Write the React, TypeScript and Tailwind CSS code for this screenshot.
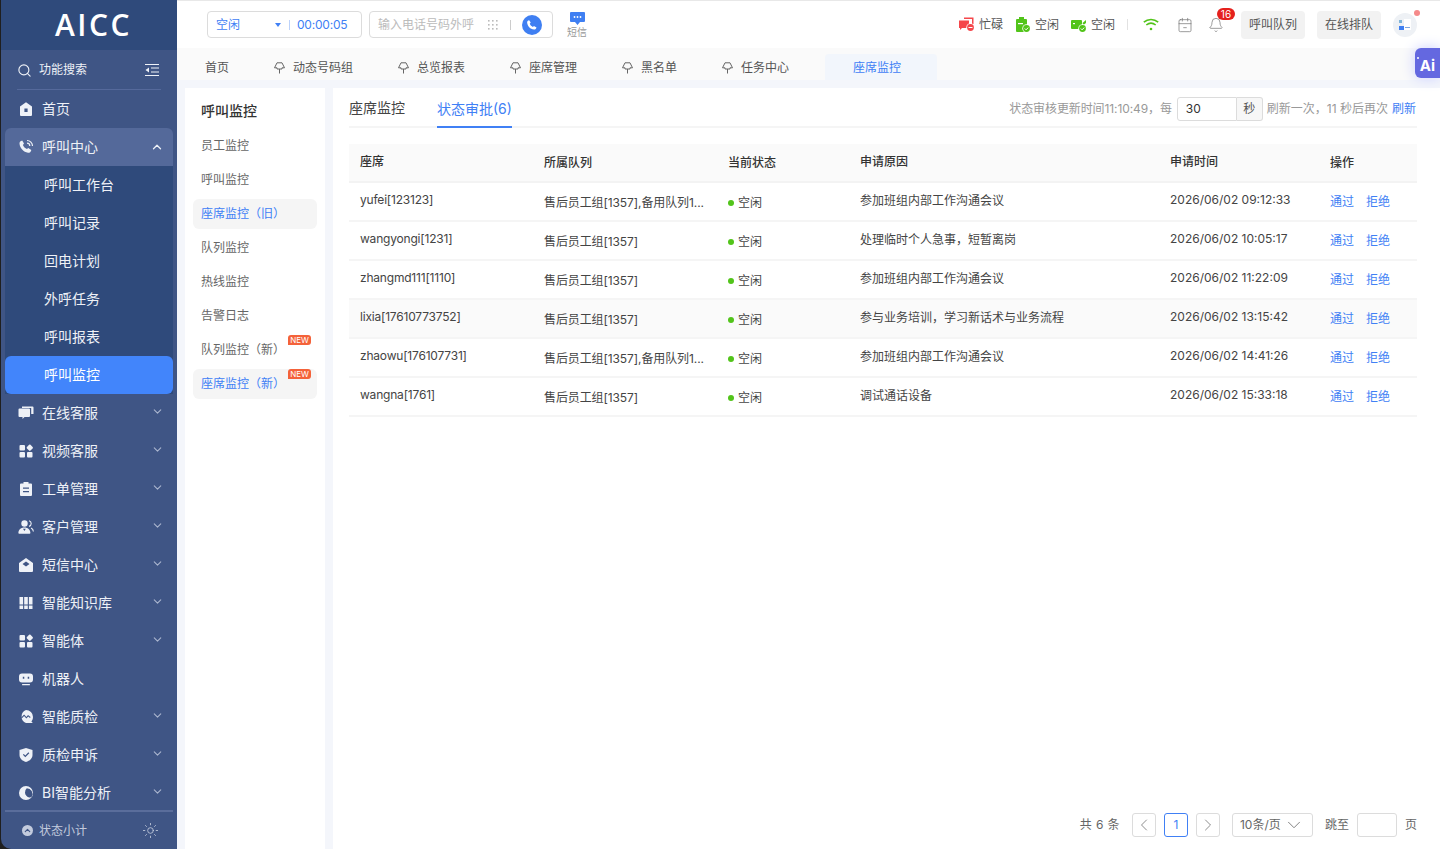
import { ReactNode } from 'react';
import { ChevronDown, ChevronLeft, ChevronRight, ChevronUp, Search, Sun, Bell, CalendarMinus2 } from 'lucide-react';

const font = "font-['Inter','Noto_Sans_CJK_SC',sans-serif]";

function Glyph({ children, size = 16 }: { children: ReactNode; size?: number }) {
  return (
    <svg width={size} height={size} viewBox="0 0 16 16" fill="currentColor" className="shrink-0">
      {children}
    </svg>
  );
}

const HomeIcon = () => (
  <Glyph>
    <path fillRule="evenodd" d="M8 1.200 14 5.400V14a1 1 0 0 1-1 1H3a1 1 0 0 1-1-1V5.400L8 1.200ZM6.400 7.500v3.400h3.200V7.500H6.400Z" />
  </Glyph>
);
const PhoneIcon = () => (
  <Glyph>
    <path d="M4.200 1.500 6 4.600 4.900 6c.7 1.800 2.200 3.300 4 4.100l1.400-1.100 3 1.900c-.4 1.900-1.700 3-3.300 2.900C5.500 13.400 1.800 9 1.500 4.600 1.400 3 2.500 1.800 4.200 1.500Z" />
    <path d="M9 1.500a5.500 5.500 0 0 1 5.500 5.500M9 4.200A2.800 2.800 0 0 1 11.800 7" fill="none" stroke="currentColor" strokeWidth="1.200" />
  </Glyph>
);
const ChatIcon = () => (
  <Glyph>
    <path d="M.5 4.500a1 1 0 0 1 1-1h9.500a1 1 0 0 1 1 1V11a1 1 0 0 1-1 1H6.500l-2 2v-2h-3a1 1 0 0 1-1-1Z" />
    <path d="M4 1.500h10.500a1 1 0 0 1 1 1V9h-2.300V3H4z" />
  </Glyph>
);
const AppsIcon = () => (
  <Glyph>
    <rect x="1.500" y="2" width="5.500" height="5.500" rx="1" />
    <rect x="1.500" y="9" width="5.500" height="5.500" rx="1" />
    <rect x="9" y="9" width="5.500" height="5.500" rx="1" />
    <rect x="9.300" y="2.200" width="5" height="5" rx="1" transform="rotate(45 11.800 4.700)" />
  </Glyph>
);
const TicketIcon = () => (
  <Glyph>
    <path fillRule="evenodd" d="M5.500 1h5v1.500H13a1 1 0 0 1 1 1V14a1 1 0 0 1-1 1H3a1 1 0 0 1-1-1V3.500a1 1 0 0 1 1-1h2.500V1ZM5 6.500v1.300h6V6.500H5Zm0 3.500v1.300h6V10H5Z" />
  </Glyph>
);
const PeopleIcon = () => (
  <Glyph>
    <circle cx="6.500" cy="4.500" r="3.200" />
    <path fillRule="evenodd" d="M.4 14c0-3.200 2.600-5.400 6-5.400s6 2.200 6 5.400a.8.8 0 0 1-.8.8H1.200a.8.8 0 0 1-.8-.8Zm4.600-4.300 1.400 2.400 1.400-2.400H5Z" />
    <path d="M11 1.800c1.400.4 2.200 1.500 2.200 2.800S12.400 7 11 7.400M13 9c1.500.7 2.300 2 2.400 3.500" fill="none" stroke="currentColor" strokeWidth="1.100" />
  </Glyph>
);
const MailIcon = () => (
  <Glyph>
    <path fillRule="evenodd" d="M8 1 15 6v8a1 1 0 0 1-1 1H2a1 1 0 0 1-1-1V6l7-5Zm0 3.500L4.500 7 8 9.500 11.500 7 8 4.500Z" />
  </Glyph>
);
const BooksIcon = () => (
  <Glyph>
    <path fillRule="evenodd" d="M1.500 2h3.600v12H1.500V2Zm4.700 0h3.600v12H6.200V2Zm4.700 0h3.600v12h-3.600V2ZM1.500 9.500v1h3.600v-1H1.500Zm4.700 0v1h3.600v-1H6.200Zm4.700 0v1h3.600v-1h-3.600Z" />
  </Glyph>
);
const RobotIcon = () => (
  <Glyph>
    <path fillRule="evenodd" d="M4 2.500h8a3 3 0 0 1 3 3v3a3 3 0 0 1-3 3H4a3 3 0 0 1-3-3v-3a3 3 0 0 1 3-3Zm.8 3.300v2h1.500v-2H4.800Zm4.900 0v2h1.500v-2H9.700Z" />
    <rect x="4" y="13" width="8" height="1.300" rx=".6" />
  </Glyph>
);
const PulseIcon = () => (
  <Glyph>
    <path fillRule="evenodd" d="M8 1a7 7 0 0 1 7 7c0 1.700-.6 3.200-1.600 4.400l1.400 1.600h-6.800a7 7 0 0 1 0-13ZM3.500 8.300l.8.800 1.800-2 2.300 2.500 1.800-2 1.800 1.300.6-.9-2.600-1.900-1.600 1.800-2.300-2.500L3.500 8.300Z" />
  </Glyph>
);
const ShieldIcon = () => (
  <Glyph>
    <path fillRule="evenodd" d="M8 1 14.500 3v5c0 3.300-2.500 5.800-6.500 7-4-1.200-6.500-3.700-6.500-7V3L8 1ZM4.900 7.800 7.300 10.200l4-4-.9-.9-3.100 3.100-1.500-1.500-.9.9Z" />
  </Glyph>
);
const PieIcon = () => (
  <Glyph>
    <path fillRule="evenodd" d="M8 1a7 7 0 1 1 0 14A7 7 0 0 1 8 1Zm.8 2.300a5.200 5.200 0 0 0-1.800 4.500c.2 2.400 2 4.300 4.400 4.700.8 0 1.800-.3 2.300-.8A5.600 5.600 0 0 0 8.800 3.300Z" />
  </Glyph>
);

type MenuItem = { label: string; icon: ReactNode; arrow?: boolean };

const topMenu: MenuItem[] = [
  { label: '在线客服', icon: <ChatIcon />, arrow: true },
  { label: '视频客服', icon: <AppsIcon />, arrow: true },
  { label: '工单管理', icon: <TicketIcon />, arrow: true },
  { label: '客户管理', icon: <PeopleIcon />, arrow: true },
  { label: '短信中心', icon: <MailIcon />, arrow: true },
  { label: '智能知识库', icon: <BooksIcon />, arrow: true },
  { label: '智能体', icon: <AppsIcon />, arrow: true },
  { label: '机器人', icon: <RobotIcon /> },
  { label: '智能质检', icon: <PulseIcon />, arrow: true },
  { label: '质检申诉', icon: <ShieldIcon />, arrow: true },
  { label: 'BI智能分析', icon: <PieIcon />, arrow: true },
];

const callSub = ['呼叫工作台', '呼叫记录', '回电计划', '外呼任务', '呼叫报表'];

function Sidebar() {
  return (
    <aside className="w-[177px] shrink-0 h-full bg-[#1f1f1f] pl-px">
      <div className="h-full flex flex-col bg-[#3f5585] rounded-bl-[10px] overflow-hidden text-[#eef1f7]">
        <div className="h-[50px] shrink-0 bg-[#2f4a7b] flex items-center justify-center pl-[9px]">
          <span className="text-[30px] font-semibold tracking-[2.500px] text-white leading-none font-['Open_Sans',sans-serif]">AICC</span>
        </div>
        <div className="mx-4 h-10 shrink-0 flex items-center justify-between border-b border-[#55699b] pr-0.5 pt-px">
          <div className="flex items-center gap-[7px] text-xs">
            <Search size={15} strokeWidth={1.800} />
            <span>功能搜索</span>
          </div>
          <svg width="14" height="14" viewBox="0 0 14 14" fill="none" stroke="currentColor" strokeWidth="1.200">
            <path d="M0 1.500h14M6 5h8M6 9h8M0 12.500h14" />
            <path d="M4 4.500v5L.5 7z" fill="currentColor" stroke="none" />
          </svg>
        </div>
        <div className="h-[38px] shrink-0 flex items-center gap-2 pl-[17px] text-sm"><HomeIcon />首页</div>
        <div className="mx-1 h-[38px] shrink-0 flex items-center gap-2 pl-[13px] pr-[9px] text-sm bg-[#54699a] rounded-t-md">
          <PhoneIcon />
          <span className="flex-1">呼叫中心</span>
          <ChevronUp size={14} strokeWidth={2.200} />
        </div>
        <div className="shrink-0 bg-[#2f4a7b] mx-1">
          {callSub.map((s) => (
            <div key={s} className="h-[38px] flex items-center pl-[39px] text-sm">{s}</div>
          ))}
          <div className="h-[38px] flex items-center pl-[39px] text-sm text-white bg-[#4285fb] rounded-md">呼叫监控</div>
        </div>
        {topMenu.map((m) => (
          <div key={m.label} className="h-[38px] shrink-0 flex items-center gap-2 pl-[17px] pr-[13px] text-sm">
            {m.icon}
            <span className="flex-1">{m.label}</span>
            {m.arrow && <ChevronDown size={13} className="text-[#aab5cf] -mt-1" />}
          </div>
        ))}
        <div className="-mt-[2px] mx-1 h-[39px] shrink-0 border-t-2 border-[#5a6d9b] flex items-center justify-between pl-[17px] pr-[14px] text-xs text-[#c3cbdd]">
          <div className="flex items-center gap-[6px]">
            <span className="w-[11px] h-[11px] rounded-full bg-[#c3cbdd] flex items-center justify-center text-[#3f5585]">
              <ChevronUp size={9} strokeWidth={3} />
            </span>
            状态小计
          </div>
          <Sun size={17} strokeWidth={1.200} />
        </div>
      </div>
    </aside>
  );
}

function StatusChip({ color, label, children }: { color: string; label: string; children: ReactNode }) {
  return (
    <div className={`flex items-center gap-1 text-xs ${color}`}>
      {children}
      <span className="text-[#555]">{label}</span>
    </div>
  );
}

function Topbar() {
  return (
    <header className="h-12 shrink-0 bg-white flex items-center pl-[30px] pr-[23px] border-t border-[#e8e8e8]">
      <div className="w-[155px] h-[27px] border border-[#dcdcdc] rounded flex items-center pl-2 text-xs text-[#4080f5]">
        <span className="w-[59px]">空闲</span>
        <span className="w-0 h-0 border-x-[3.500px] border-x-transparent border-t-[4px] border-t-[#4080f5]" />
        <span className="w-px h-[10px] bg-[#bcd2fb] ml-2 mr-[7px]" />
        <span className="tracking-[-0.2px]">00:00:05</span>
      </div>
      <div className="w-[184px] h-[27px] ml-[7px] border border-[#dcdcdc] rounded flex items-center pl-2 pr-[10px] text-xs text-[#bbb]">
        <span className="flex-1">输入电话号码外呼</span>
        <svg width="10" height="10" viewBox="0 0 10 10" fill="#bbb">
          {[1, 5, 9].flatMap((y) => [1, 5, 9].map((x) => <rect key={`${x}-${y}`} x={x - 1} y={y - 1} width="1.600" height="1.600" />))}
        </svg>
        <span className="w-px h-[10px] bg-[#ccc] ml-[12px] mr-[11px]" />
        <span className="w-5 h-5 rounded-full bg-[#3f7ff2] flex items-center justify-center text-white">
          <svg width="12" height="12" viewBox="0 0 16 16" fill="currentColor">
            <path d="M4.200 1.500 6.300 4.800 5 6.300c.8 1.900 2.300 3.400 4.200 4.200l1.400-1.200 3.400 2.100c-.4 1.800-1.600 2.800-3.300 2.700C5.600 13.800 1.900 9.400 1.500 4.700 1.400 3 2.500 1.800 4.200 1.500Z" />
          </svg>
        </span>
      </div>
      <div className="ml-[14px] w-5 flex flex-col items-center text-[10px] leading-[12px] text-[#999]">
        <svg width="15" height="14" viewBox="0 0 15 14" fill="#3f7ff2">
          <path d="M1 0h13a1 1 0 0 1 1 1v8a1 1 0 0 1-1 1H10l-2.500 3L5 10H1a1 1 0 0 1-1-1V1a1 1 0 0 1 1-1Z" />
          <circle cx="4.500" cy="5" r=".9" fill="#fff" /><circle cx="7.500" cy="5" r=".9" fill="#fff" /><circle cx="10.500" cy="5" r=".9" fill="#fff" />
        </svg>
        短信
      </div>

      <div className="ml-auto flex items-center">
        <StatusChip color="text-[#f5474b]" label="忙碌">
          <svg width="16" height="15" viewBox="0 0 16 15" fill="currentColor">
            <path d="M0 3.500h10v7.500H3l-2 2v-2H0z" /><path d="M5 .5h9.500V7H13V2H5z" />
            <circle cx="11.500" cy="10.500" r="4.200" fill="#fff" /><circle cx="11.500" cy="10.500" r="3.400" /><rect x="9.500" y="10" width="4" height="1" fill="#fff" />
          </svg>
        </StatusChip>
        <span className="w-3" />
        <StatusChip color="text-[#52c41a]" label="空闲">
          <svg width="16" height="16" viewBox="0 0 16 16" fill="currentColor">
            <rect x="4" y="0" width="5" height="3" /><rect x="1" y="2" width="11" height="13" rx="1" />
            <rect x="3" y="6" width="5" height="1.200" fill="#fff" />
            <circle cx="11.500" cy="11.500" r="4.200" fill="#fff" /><circle cx="11.500" cy="11.500" r="3.400" />
            <path d="m9.800 11.500 1.300 1.300 2.100-2.200" stroke="#fff" fill="none" />
          </svg>
        </StatusChip>
        <span className="w-3" />
        <StatusChip color="text-[#52c41a]" label="空闲">
          <svg width="16" height="16" viewBox="0 0 16 16" fill="currentColor">
            <rect x="0" y="3" width="11" height="9" rx="1" /><path d="m11.500 6 3.500-3v3l-2.500 2z" />
            <rect x="2" y="6" width="2" height="1.200" fill="#fff" />
            <circle cx="11.500" cy="11.500" r="4.200" fill="#fff" /><circle cx="11.500" cy="11.500" r="3.400" />
            <path d="m9.800 11.500 1.300 1.300 2.100-2.200" stroke="#fff" fill="none" />
          </svg>
        </StatusChip>
        <span className="w-px h-[11px] bg-[#e2e2e2] mx-3" />
        <svg width="16" height="13" viewBox="0 0 16 13" fill="none" stroke="#52c41a" strokeWidth="1.600" className="mr-[18px] ml-[3px]">
          <path d="M.8 4.200c4.200-3.600 10.200-3.600 14.400 0M3.300 7c2.800-2.300 6.600-2.300 9.400 0" />
          <circle cx="8" cy="11" r="1.300" fill="#52c41a" stroke="none" />
        </svg>
        <CalendarMinus2 size={16} strokeWidth={1.100} className="text-[#777] mr-[15px]" />
        <div className="relative mr-[17px]">
          <Bell size={16} strokeWidth={1.100} className="text-[#777]" />
          <span className="absolute -top-[9px] left-[9px] h-3 w-[18px] rounded-full bg-[#e5211d] text-white text-[10px] leading-3 text-center">16</span>
        </div>
        <button className="w-16 h-7 bg-[#f2f2f2] rounded text-xs text-[#555]">呼叫队列</button>
        <button className="w-16 h-7 bg-[#f2f2f2] rounded text-xs text-[#555] ml-3">在线排队</button>
        <div className="relative ml-3 w-6 h-6 rounded-full bg-[#eef1f5] flex items-center justify-center">
          <svg width="14" height="14" viewBox="0 0 14 14">
            <rect x="1" y="2" width="3" height="3" fill="#7fb4d8" />
            <rect x="1" y="8" width="5" height="4" fill="#3f7ff2" />
            <rect x="6" y="1" width="7" height="11" fill="#fff" />
            <rect x="7" y="9" width="5" height="1" fill="#7fa8e0" />
          </svg>
          <span className="absolute -top-[3px] -right-[3px] w-[6px] h-[6px] rounded-full bg-[#f58a8a]" />
        </div>
      </div>
    </header>
  );
}

const Pin = () => (
  <svg width="11" height="12" viewBox="0 0 11 12" fill="none" stroke="#666" strokeWidth="1" className="shrink-0">
    <path d="M3 .8h5l2.500 5H8L8 7H3V5.800H.5zM5.500 7v4.500" />
  </svg>
);

function Tabs() {
  const tabs = ['动态号码组', '总览报表', '座席管理', '黑名单', '任务中心'];
  return (
    <div className="relative h-8 shrink-0 bg-[#fafafa] flex items-end pl-7 gap-[45px] text-xs text-[#555]">
      <span className="h-[26px] flex items-center pt-[2px]">首页</span>
      {tabs.map((t) => (
        <span key={t} className="h-[26px] flex items-center gap-2 pt-[2px]"><Pin />{t}</span>
      ))}
      <span className="-ml-[9px] h-[26px] w-28 flex items-center pl-7 pt-[2px] bg-[#f2f6fc] text-[#4080f5] rounded-t">座席监控</span>
      <div className="absolute right-0 top-0 w-[25px] h-[30px] bg-[#6468e0] rounded-l-md flex items-center justify-center pt-[5px] text-white text-[15px] font-bold shadow-[0_0_14px_#c9ceff]">
        <span className="relative leading-none">
          Ai
          <span className="absolute -top-[1px] -left-[3px] w-[2px] h-[2px] rounded-full bg-white" />
        </span>
      </div>
    </div>
  );
}

const subNav = [
  { label: '员工监控' },
  { label: '呼叫监控' },
  { label: '座席监控（旧）', active: true },
  { label: '队列监控' },
  { label: '热线监控' },
  { label: '告警日志' },
  { label: '队列监控（新）', isNew: true },
  { label: '座席监控（新）', active: true, isNew: true },
];

function SubNav() {
  return (
    <nav className="w-[140px] shrink-0 bg-white px-2 pt-3">
      <div className="pl-2 text-sm leading-[22px] font-medium text-[#333] mb-[9px]">呼叫监控</div>
      {subNav.map((n) => (
        <div key={n.label} className={`relative h-[30px] mb-1 flex items-center pl-2 text-xs rounded-md ${n.active ? 'bg-[#f5f5f5] text-[#4080f5]' : 'text-[#666]'}`}>
          {n.label}
          {n.isNew && (
            <span className="absolute right-[6px] top-0 h-[10px] w-[23px] rounded-[3px] rounded-bl-none bg-[#f4623a] text-white text-[8px] leading-[10px] text-center">NEW</span>
          )}
        </div>
      ))}
    </nav>
  );
}

const rows = [
  ['yufei[123123]', '售后员工组[1357],备用队列1...', '参加班组内部工作沟通会议', '2026/06/02 09:12:33'],
  ['wangyongi[1231]', '售后员工组[1357]', '处理临时个人急事，短暂离岗', '2026/06/02 10:05:17'],
  ['zhangmd111[1110]', '售后员工组[1357]', '参加班组内部工作沟通会议', '2026/06/02 11:22:09'],
  ['lixia[17610773752]', '售后员工组[1357]', '参与业务培训，学习新话术与业务流程', '2026/06/02 13:15:42'],
  ['zhaowu[176107731]', '售后员工组[1357],备用队列1...', '参加班组内部工作沟通会议', '2026/06/02 14:41:26'],
  ['wangna[1761]', '售后员工组[1357]', '调试通话设备', '2026/06/02 15:33:18'],
];

const gridCols = 'grid grid-cols-[184px_184px_132px_310px_160px_98px] items-center';

function ApprovalTable() {
  return (
    <div className="mt-4 text-xs text-[#444]">
      <div className={`${gridCols} h-[39px] bg-[#fafafa] border-b-2 border-[#f3f3f3] text-[#333] font-medium`}>
        <div className="pl-[11px] pb-[2px]">座席</div>
        <div className="pl-[11px] pt-px">所属队列</div>
        <div className="pl-[11px] pt-px">当前状态</div>
        <div className="pl-[11px] pb-[2px]">申请原因</div>
        <div className="pl-[11px] pb-[2px]">申请时间</div>
        <div className="pl-[11px] pt-px">操作</div>
      </div>
      {rows.map((r, i) => (
        <div key={r[0]} className={`${gridCols} h-[39px] border-b-2 border-[#f5f5f5] ${i === 3 ? 'bg-[#fafafa]' : ''}`}>
          <div className="pl-[11px] pb-[3px] tracking-[-0.2px]">{r[0]}</div>
          <div className="pl-[11px] pt-[3px] whitespace-nowrap tracking-[-0.1px]">{r[1]}</div>
          <div className="pl-[11px] pt-[3px] flex items-center gap-1">
            <span className="w-[6px] h-[6px] rounded-full bg-[#52c41a]" />空闲
          </div>
          <div className="pl-[11px] pb-[2px]">{r[2]}</div>
          <div className="pl-[11px] pb-[3px]">{r[3]}</div>
          <div className="pl-[11px] flex gap-3 text-[#4080f5]">
            <span>通过</span>
            <span>拒绝</span>
          </div>
        </div>
      ))}
    </div>
  );
}

function Pagination() {
  const box = 'h-6 border border-[#dcdcdc] rounded-[3px] flex items-center justify-center';
  return (
    <div className="mt-auto mb-3 flex items-center justify-end text-xs text-[#666]">
      <span className="tracking-[0.4px]">共 6 条</span>
      <span className={`${box} w-6 ml-3 text-[#777]`}><ChevronLeft size={20} strokeWidth={1} /></span>
      <span className="w-6 h-6 ml-[8px] border border-[#4080f5] rounded-[3px] flex items-center justify-center text-[#4080f5]">1</span>
      <span className={`${box} w-6 ml-[8px] text-[#777]`}><ChevronRight size={20} strokeWidth={1} /></span>
      <span className={`${box} w-[81px] ml-3 !justify-start pl-[7px]`}>
        <span className="w-[46px] shrink-0 whitespace-nowrap">10条/页</span>
        <ChevronDown size={22} strokeWidth={1} className="shrink-0 text-[#777] -ml-[3px]" />
      </span>
      <span className="ml-3">跳至</span>
      <span className={`${box} w-10 ml-2`} />
      <span className="ml-2">页</span>
    </div>
  );
}

function Monitor() {
  return (
    <section className="flex-1 min-w-0 bg-white ml-2 pl-4 pr-[23px] flex flex-col">
      <div className="h-10 flex items-end justify-between border-b-2 border-[#f5f5f5] shrink-0">
        <div className="flex gap-8 text-sm">
          <span className="h-[37px] flex items-center pt-[2px] text-[#444]">座席监控</span>
          <span className="h-[40px] -mb-[2px] flex items-center pt-1 text-[#4080f5] border-b-2 border-[#4080f5]">状态审批(6)</span>
        </div>
        <div className="flex items-center h-[26px] mb-1 mr-px text-xs text-[#999]">
          <span className="tracking-[-0.1px]">状态审核更新时间11:10:49，每</span>
          <span className="ml-[5px] w-[60px] h-6 border border-[#dcdcdc] rounded-l-[3px] flex items-center pl-2 text-[#333]">30</span>
          <span className="w-[26px] h-6 border border-l-0 border-[#dcdcdc] rounded-r-[3px] bg-[#f7f7f7] flex items-center justify-center text-[#555]">秒</span>
          <span className="ml-1">刷新一次，11 秒后再次</span>
          <span className="ml-1 text-[#4080f5]">刷新</span>
        </div>
      </div>
      <ApprovalTable />
      <Pagination />
    </section>
  );
}

export default function App() {
  return (
    <div className={`w-[1440px] h-[849px] flex overflow-hidden bg-[#f4f6fb] ${font}`}>
      <Sidebar />
      <div className="flex-1 min-w-0 flex flex-col">
        <Topbar />
        <Tabs />
        <div className="flex-1 min-h-0 flex pt-2 pl-2">
          <SubNav />
          <Monitor />
        </div>
      </div>
    </div>
  );
}
